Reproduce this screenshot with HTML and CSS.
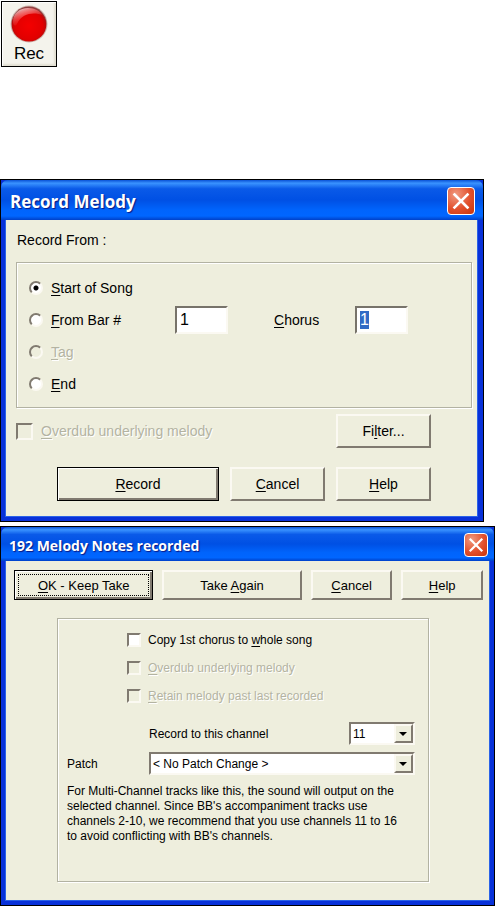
FILE: index.html
```
<!DOCTYPE html>
<html lang="en">
<head>
    <meta charset="UTF-8">
    <meta name="viewport" content="width=device-width, initial-scale=1.0">
    <title>Record Melody</title>
    <link rel="stylesheet" href="styles.css">
</head>
<body>
    <button class="rec" type="button">
        <svg width="38" height="38" viewBox="0 0 38 38" aria-hidden="true">
            <defs>
                <radialGradient id="ball" cx="50%" cy="55%" r="52%">
                    <stop offset="0" stop-color="#f40000"/>
                    <stop offset="0.75" stop-color="#e20000"/>
                    <stop offset="0.92" stop-color="#c00808"/>
                    <stop offset="1" stop-color="#904040"/>
                </radialGradient>
                <linearGradient id="shine" x1="0" y1="0" x2="0.5" y2="1">
                    <stop offset="0" stop-color="#fff" stop-opacity="0.9"/>
                    <stop offset="1" stop-color="#ff4040" stop-opacity="0"/>
                </linearGradient>
            </defs>
            <circle cx="19" cy="19" r="18.5" fill="#cdb5ad"/>
            <circle cx="19" cy="19" r="17.5" fill="url(#ball)"/>
            <path d="M3 17C3 8 10 3 18 3c7 0 12 3 14 7-8-3-20-2-25 9-2 3-4 1-4-2z" fill="url(#shine)"/>
        </svg>
        <span>Rec</span>
    </button>

    <section class="dialog record" aria-labelledby="recordTitle">
        <header class="titlebar">
            <h1 id="recordTitle">Record Melody</h1>
            <button class="close" type="button" aria-label="Close">
                <svg viewBox="0 0 24 24" aria-hidden="true"><path d="M6 6l12 12M18 6L6 18"/></svg>
            </button>
        </header>
        <form class="content">
            <p class="from" id="fromLabel">Record From :</p>
            <div class="group places" role="radiogroup" aria-labelledby="fromLabel">
                <label class="option"><input type="radio" name="from" checked><span><u>S</u>tart of Song</span></label>
                <label class="option bar"><input type="radio" name="from"><span><u>F</u>rom Bar #</span></label>
                <input class="number" type="text" value="1" aria-label="Bar number">
                <label for="chorus"><span><u>C</u>horus</span></label>
                <input class="number" type="text" id="chorus" value="1">
                <label class="option off"><input type="radio" name="from" disabled><span><u>T</u>ag</span></label>
                <label class="option"><input type="radio" name="from"><span><u>E</u>nd</span></label>
            </div>
            <div class="row filter">
                <label class="option off"><input type="checkbox" disabled><span><u>O</u>verdub underlying melody</span></label>
                <button class="btn" type="button"><span>Fi<u>l</u>ter...</span></button>
            </div>
            <div class="row actions">
                <button class="btn default" type="button"><span><u>R</u>ecord</span></button>
                <button class="btn" type="button"><span><u>C</u>ancel</span></button>
                <button class="btn" type="button"><span><u>H</u>elp</span></button>
            </div>
        </form>
    </section>

    <section class="dialog recorded" aria-labelledby="recordedTitle">
        <header class="titlebar">
            <h1 id="recordedTitle">192 Melody Notes recorded</h1>
            <button class="close" type="button" aria-label="Close">
                <svg viewBox="0 0 24 24" aria-hidden="true"><path d="M6 6l12 12M18 6L6 18"/></svg>
            </button>
        </header>
        <form class="content">
            <div class="commands">
                <button class="btn default focus" type="button"><span><u>O</u>K - Keep Take</span></button>
                <button class="btn" type="button"><span>Take <u>A</u>gain</span></button>
                <button class="btn" type="button"><span><u>C</u>ancel</span></button>
                <button class="btn" type="button"><span><u>H</u>elp</span></button>
            </div>
            <div class="group settings">
                <div class="checks">
                    <label class="option"><input type="checkbox"><span>Copy 1st chorus to <u>w</u>hole song</span></label>
                    <label class="option off"><input type="checkbox" disabled><span><u>O</u>verdub underlying melody</span></label>
                    <label class="option off"><input type="checkbox" disabled><span><u>R</u>etain melody past last recorded</span></label>
                </div>
                <div class="fields">
                    <label class="channel" for="channel">Record to this channel</label>
                    <span class="combo">
                        <select id="channel"><option>11</option><option>12</option><option>13</option><option>14</option><option>15</option><option>16</option></select>
                    </span>
                    <label for="patch">Patch</label>
                    <span class="combo wide">
                        <select id="patch"><option>&lt; No Patch Change &gt;</option></select>
                    </span>
                </div>
                <p class="note">For Multi-Channel tracks like this, the sound will output on the<br>selected channel. Since BB's accompaniment tracks use<br>channels 2-10, we recommend that you use channels 11 to 16<br>to avoid conflicting with BB's channels.</p>
            </div>
        </form>
    </section>

    <script>
        document.getElementById("chorus").select();
    </script>
</body>
</html>
```

FILE: styles.css
```
*, *::before, *::after { box-sizing: border-box; }
body { margin: 0; background: #fff; color: #000; font-family: "Liberation Sans", Arial, sans-serif; font-size: 14px; }
button, input, select { font: inherit; color: inherit; margin: 0; }
h1, p { margin: 0; }
u { text-underline-offset: 2px; text-decoration-thickness: 1px; text-decoration-skip-ink: none; }
::selection { background: #316ac5; color: #fff; }

.rec { display: flex; flex-direction: column; align-items: center; width: 56px; height: 66px; margin: 1px 0 112px 1px; padding: 3px 0 0; border: 1px solid #000; background: #f4f3ec; box-shadow: inset 1px 1px 1px #fff, inset -2px -2px 2px #e2dfd2; font-size: 17px; line-height: 22px; }
.rec svg { display: block; }

.dialog { border: 1px solid #000; background: #0831d9; }
.record { max-width: 484px; margin-right: 11px; margin-bottom: 4px; }
.titlebar { display: flex; align-items: center; justify-content: space-between; height: 40px; padding: 2px 8px 0 9px; border-radius: 7px 7px 0 0; background: linear-gradient(#0a52d6, #3a93ff 8%, #0a5ae8 22%, #0050e4 50%, #0064fc 75%, #0066ff 90%, #0040c8); color: #fff; }
.titlebar h1 { font-family: "Open Sans", "Noto Sans", sans-serif; font-size: 17px; font-weight: bold; text-shadow: 1px 1px 1px #0a1883; white-space: nowrap; }
.close { width: 28px; height: 28px; padding: 0; border: 1px solid #fff; border-radius: 4px; background: radial-gradient(circle at 30% 25%, #f09a80, #e2502c 55%, #c83408); }
.close svg { display: block; width: 100%; height: 100%; fill: none; stroke: #fff; stroke-width: 2.4; stroke-linecap: square; }
.content { background: #eeeedd; border: 1px solid #2a62e8; border-top: 0; margin: 0 5px 4px 4px; }

.group { border: 1px solid #b2b2a2; box-shadow: 1px 1px 0 #fff, inset 1px 1px 0 #fff; }
.option { display: flex; align-items: center; gap: 8px; }
.off { color: #b3b3a2; text-shadow: 1px 1px 0 #fff; }
.row { display: flex; }

input[type="radio"], input[type="checkbox"] { appearance: none; flex: none; width: 14px; height: 14px; background: #fff; border: 2px solid; border-color: #807a70 #fbf9f2 #fbf9f2 #807a70; }
input[type="radio"] { border-radius: 50%; }
input[type="radio"]:checked { background: radial-gradient(circle, #000 2px, #fff 3px); }
input:disabled { background: #eeeedd; }
.number { width: 53px; height: 28px; padding: 0 3px; background: #fff; border: 2px solid; border-color: #77736a #fbf9f2 #fbf9f2 #77736a; font-size: 16px; outline: 0; }

.btn { height: 34px; padding: 0; background: #eeeedd; border: 2px solid; border-color: #fbf9f2 #807a70 #807a70 #fbf9f2; outline: 0; }
.btn.default { border: 1px solid #000; box-shadow: inset 1px 1px 0 #fff, inset -2px -2px 0 #807a70; }
.btn.focus { padding: 3px; }
.btn.focus span { display: flex; align-items: center; justify-content: center; height: 100%; border: 1px dotted #000; white-space: pre; }

.from { padding: 12px 11px 14px; line-height: 16px; }
.places { display: grid; grid-template-columns: 146px 99px 81px 1fr; grid-auto-rows: 32px; align-items: center; margin: 0 5px 0 10px; padding: 9px 0 7px 12px; }
.places .option { grid-column: 1 / -1; }
.places .bar { grid-column: 1; }
.filter { justify-content: space-between; padding: 6px 46px 0 10px; }
.filter input { width: 17px; height: 17px; }
.record .btn { width: 95px; }
.record .actions { justify-content: flex-end; gap: 11px; padding: 19px 46px 15px 10px; }
.record .default { width: 162px; }

.recorded { font-size: 13px; }
.recorded .titlebar { height: 34px; padding-right: 6px; padding-left: 8px; }
.recorded .titlebar h1 { font-size: 14px; }
.recorded .close { width: 24px; height: 24px; }
.recorded .content { margin: 0 4px 4px; }
.commands { display: grid; grid-template-columns: 140fr 140fr 82fr 82fr; gap: 9px; padding: 9px 6px 0 8px; }
.commands .btn { height: 30px; }
.settings { margin: 18px 60px 18px 51px; padding: 7px 13px 37px 9px; font-size: 12px; }
.checks { padding-left: 60px; }
.checks .option { height: 28px; gap: 7px; }
.fields { display: grid; grid-template-columns: 82px 1fr 66px; row-gap: 7px; align-items: center; padding-top: 12px; }
.channel { grid-column: 2; }
.combo { position: relative; height: 23px; }
.wide { grid-column: 2 / -1; }
.combo select { appearance: none; display: block; width: 100%; height: 23px; padding: 0 20px 0 2px; background: #fff; border: 2px solid; border-color: #807a70 #fbf9f2 #fbf9f2 #807a70; border-radius: 0; }
.combo::before { content: ""; position: absolute; top: 2px; right: 2px; width: 19px; height: 19px; background: #eeeedd; border: 2px solid; border-color: #fbf9f2 #807a70 #807a70 #fbf9f2; pointer-events: none; }
.combo::after { content: ""; position: absolute; top: 10px; right: 8px; border: 4px solid transparent; border-top-color: #000; border-bottom: 0; pointer-events: none; }
.note { padding-top: 9px; line-height: 15px; white-space: nowrap; }
```
